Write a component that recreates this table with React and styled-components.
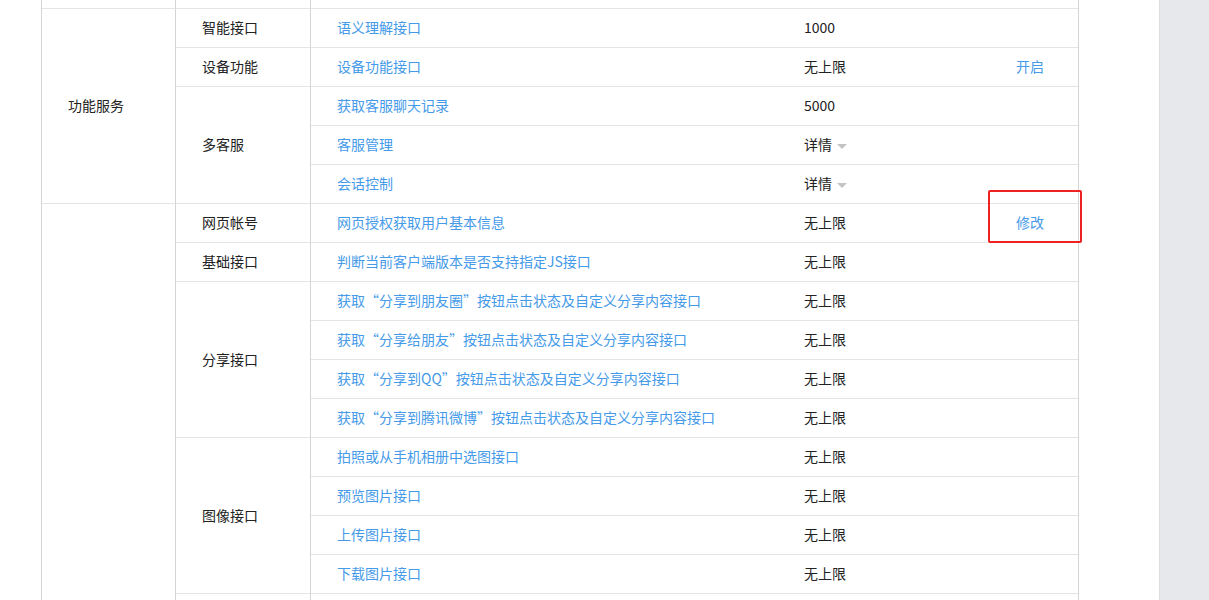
import React from 'react'
import styled, { createGlobalStyle } from 'styled-components'

const GlobalStyle = createGlobalStyle`
  html, body {
    margin: 0;
    padding: 0;
    overflow: hidden;
    background: #fff;
  }
  body {
    font-family: "Noto Sans CJK SC", "Microsoft YaHei", "Liberation Sans", sans-serif;
    font-size: 14px;
    color: #222;
  }
`

const groups = [
  {
    name: '',
    tail: true,
  },
  {
    name: '功能服务',
    items: [
      { name: '智能接口', rows: [{ api: '语义理解接口', limit: '1000' }] },
      { name: '设备功能', rows: [{ api: '设备功能接口', limit: '无上限', action: '开启' }] },
      {
        name: '多客服',
        rows: [
          { api: '获取客服聊天记录', limit: '5000' },
          { api: '客服管理', limit: '详情', caret: true },
          { api: '会话控制', limit: '详情', caret: true },
        ],
      },
    ],
  },
  {
    name: '网页服务',
    items: [
      { name: '网页帐号', rows: [{ api: '网页授权获取用户基本信息', limit: '无上限', action: '修改', marked: true }] },
      { name: '基础接口', rows: [{ api: '判断当前客户端版本是否支持指定JS接口', limit: '无上限' }] },
      {
        name: '分享接口',
        rows: [
          { api: '获取“分享到朋友圈”按钮点击状态及自定义分享内容接口', limit: '无上限' },
          { api: '获取“分享给朋友”按钮点击状态及自定义分享内容接口', limit: '无上限' },
          { api: '获取“分享到QQ”按钮点击状态及自定义分享内容接口', limit: '无上限' },
          { api: '获取“分享到腾讯微博”按钮点击状态及自定义分享内容接口', limit: '无上限' },
        ],
      },
      {
        name: '图像接口',
        rows: [
          { api: '拍照或从手机相册中选图接口', limit: '无上限' },
          { api: '预览图片接口', limit: '无上限' },
          { api: '上传图片接口', limit: '无上限' },
          { api: '下载图片接口', limit: '无上限' },
        ],
      },
      {
        name: '音频接口',
        rows: [
          { api: '开始录音接口', limit: '无上限' },
          { api: '停止录音接口', limit: '无上限' },
          { api: '监听录音自动停止接口', limit: '无上限' },
          { api: '播放语音接口', limit: '无上限' },
          { api: '暂停播放接口', limit: '无上限' },
          { api: '停止播放接口', limit: '无上限' },
          { api: '上传语音接口', limit: '无上限' },
          { api: '下载语音接口', limit: '无上限' },
        ],
      },
      { name: '智能接口', rows: [{ api: '识别音频并返回识别结果接口', limit: '无上限' }] },
      { name: '设备信息', rows: [{ api: '获取网络状态接口', limit: '无上限' }] },
      {
        name: '地理位置',
        rows: [
          { api: '使用微信内置地图查看位置接口', limit: '无上限' },
          { api: '获取地理位置接口', limit: '无上限' },
        ],
      },
    ],
  },
]

const Page = () => {
  return (
    <Layout>
      <GlobalStyle />
      <Main>
        <Table>
          <colgroup>
            <Col $w={134} />
            <Col $w={135} />
            <Col $w={467} />
            <Col $w={212} />
            <Col $w={88} />
          </colgroup>
          <tbody>
            {groups.map((g, gi) => {
              if (g.tail) {
                return (
                  <tr key={gi}>
                    <GroupCell $tail />
                    <GroupCell $tail />
                    <Cell $tail />
                    <Cell $tail />
                    <Cell $tail />
                  </tr>
                )
              }
              const span = g.items.reduce((n, it) => n + it.rows.length, 0)
              const out = []
              g.items.forEach((it, ii) => {
                it.rows.forEach((r, ri) => {
                  out.push(
                    <tr key={`${gi}-${ii}-${ri}`}>
                      {ii === 0 && ri === 0 && <GroupCell rowSpan={span}>{g.name}</GroupCell>}
                      {ri === 0 && <GroupCell rowSpan={it.rows.length}>{it.name}</GroupCell>}
                      <Cell><Link>{r.api}</Link></Cell>
                      <Cell>
                        {r.limit}
                        {r.caret && <Caret />}
                      </Cell>
                      <Cell>
                        {r.action && <Link>{r.action}</Link>}
                        {r.marked && <Mark />}
                      </Cell>
                    </tr>
                  )
                })
              })
              return out
            })}
          </tbody>
        </Table>
      </Main>
      <Side />
    </Layout>
  )
}

const Layout = styled.div`
  display: flex;
  width: 100%;
  min-height: 100vh;
`

const Main = styled.div`
  width: 1159px;
  flex: none;
  padding-left: 41px;
  box-sizing: border-box;
  background: #fff;
`

const Side = styled.div`
  flex: 1;
  background: #e7e8eb;
  border-left: 1px solid #dcdde0;
`

const Table = styled.table`
  width: 1038px;
  table-layout: fixed;
  border-collapse: separate;
  border-spacing: 0;
  border-left: 1px solid #d4d4d4;
  border-right: 1px solid #d4d4d4;
`

const Col = styled.col`
  width: ${p => p.$w}px;
`

const Cell = styled.td`
  position: relative;
  box-sizing: border-box;
  height: ${p => (p.$tail ? 9 : 39)}px;
  padding: 0 0 2px 26px;
  border-bottom: 1px solid #e4e4e4;
  line-height: 20px;
  vertical-align: middle;
  white-space: nowrap;
  color: #222;
`

const GroupCell = styled(Cell)`
  border-right: 1px solid #d4d4d4;
`

const Link = styled.a`
  color: #459ae9;
  text-decoration: none;
  cursor: pointer;
`

const Caret = styled.span`
  display: inline-block;
  margin-left: 5px;
  vertical-align: middle;
  border-left: 5px solid transparent;
  border-right: 5px solid transparent;
  border-top: 5px solid #c4c4c4;
`

const Mark = styled.span`
  position: absolute;
  left: -2px;
  top: -14px;
  width: 94px;
  height: 53px;
  box-sizing: border-box;
  border: 2px solid #ee2222;
  border-radius: 2px;
  pointer-events: none;
`

export default Page
